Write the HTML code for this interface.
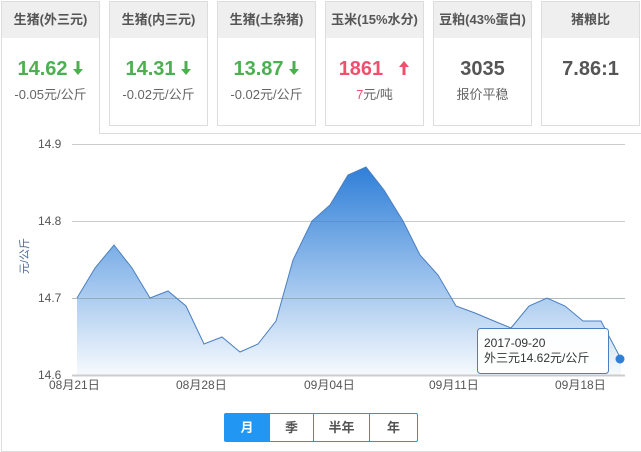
<!DOCTYPE html>
<html><head><meta charset="utf-8"><style>
*{margin:0;padding:0;box-sizing:border-box}
body{width:641px;height:452px;background:#fff;font-family:"Liberation Sans","Noto Sans CJK SC",sans-serif;position:relative;overflow:hidden}
.card{position:absolute;top:1px;width:99px;height:125px;border:1px solid #ddd;background:#fff}
.card .h{height:36px;background:#efefef;text-align:center;line-height:36px;font-size:13px;font-weight:bold;color:#555}
.card .v{text-align:center;font-size:20px;font-weight:bold;margin-top:18px;height:26px;line-height:26px}
.card .v svg{vertical-align:-1px;margin-left:4px}
.card .s{text-align:center;font-size:13px;margin-top:2px;color:#666}
.g{color:#4caf50}.r{color:#f0506e}.d{color:#555}
#panel{position:absolute;left:1px;top:133px;width:640px;height:319px;border-left:1px solid #ddd;border-bottom:1px solid #ddd}
.btns{position:absolute;left:224px;top:413px;height:29px;width:194px;border:1px solid #2196f3;border-radius:2px;display:flex;font-size:13px;font-weight:bold;color:#555}
.btns div{text-align:center;line-height:27px;border-left:1px solid #2196f3}
</style></head><body>
<div id="panel"></div>
<div style="position:absolute;left:99px;top:133px;width:542px;height:1px;background:#ddd"></div>
<div class="card" style="left:1px;height:133px;border-bottom:none"><div class="h">生猪(外三元)</div><div class="v g">14.62<svg width="12" height="16" viewBox="0 0 12 16"><path d="M4.5 1h3v8h3.5L6 15 1 9h3.5z" fill="#4caf50"/></svg></div><div class="s g">-0.05元/<span style="color:#666">公斤</span></div></div>
<div class="card" style="left:109px"><div class="h">生猪(内三元)</div><div class="v g">14.31<svg width="12" height="16" viewBox="0 0 12 16"><path d="M4.5 1h3v8h3.5L6 15 1 9h3.5z" fill="#4caf50"/></svg></div><div class="s g">-0.02元/<span style="color:#666">公斤</span></div></div>
<div class="card" style="left:217px"><div class="h">生猪(土杂猪)</div><div class="v g">13.87<svg width="12" height="16" viewBox="0 0 12 16"><path d="M4.5 1h3v8h3.5L6 15 1 9h3.5z" fill="#4caf50"/></svg></div><div class="s g">-0.02元/<span style="color:#666">公斤</span></div></div>
<div class="card" style="left:325px"><div class="h">玉米(15%水分)</div><div class="v r">1861 &nbsp;<svg width="12" height="16" viewBox="0 0 12 16"><path d="M4.5 15h3V7h3.5L6 1 1 7h3.5z" fill="#f0506e"/></svg></div><div class="s"><span class="r">7</span>元/吨</div></div>
<div class="card" style="left:433px"><div class="h">豆粕(43%蛋白)</div><div class="v d">3035</div><div class="s">报价平稳</div></div>
<div class="card" style="left:541px"><div class="h">猪粮比</div><div class="v d">7.86:1</div></div>
<svg width="641" height="452" style="position:absolute;left:0;top:0">
<defs><linearGradient id="gr" gradientUnits="userSpaceOnUse" x1="0" y1="167" x2="0" y2="375"><stop offset="0" stop-color="#2f7fd8"/><stop offset="1" stop-color="#2f7fd8" stop-opacity="0.04"/></linearGradient></defs>
<g stroke="#ccc" stroke-width="1">
<line x1="72" y1="144.5" x2="625" y2="144.5"/><line x1="72" y1="221.5" x2="625" y2="221.5"/><line x1="72" y1="298.5" x2="625" y2="298.5"/><line x1="72" y1="375.5" x2="625" y2="375.5" stroke-width="2"/></g>
<polygon fill="url(#gr)" points="77,375 77,298 95,268 114,245 132,268 150,298 168,291 186,306 204,344 222,337 240,352 258,344 276,321 293,260 312,221 330,205 348,175 366,167 384,190 403,221 420,255 438,275 456,306 475,313 494,321 511,328 529,306 547,298 565,306 583,321 601,321 621,359 621,375"/>
<line x1="72" y1="298.5" x2="625" y2="298.5" stroke="#9aa" stroke-opacity="0.5"/>
<polyline fill="none" stroke="#4a7fc0" stroke-width="1" points="77,298 95,268 114,245 132,268 150,298 168,291 186,306 204,344 222,337 240,352 258,344 276,321 293,260 312,221 330,205 348,175 366,167 384,190 403,221 420,255 438,275 456,306 475,313 494,321 511,328 529,306 547,298 565,306 583,321 601,321 621,359"/>
<circle cx="620" cy="359" r="4.5" fill="#2f7fd8"/>
<g font-family="Liberation Sans,Noto Sans CJK SC,sans-serif" font-size="12" fill="#555">
<text x="38" y="148">14.9</text><text x="38" y="225">14.8</text><text x="38" y="302">14.7</text><text x="38" y="379">14.6</text>
<text x="49" y="389">08月21日</text><text x="176" y="389">08月28日</text><text x="304" y="389">09月04日</text><text x="429" y="389">09月11日</text><text x="555" y="389">09月18日</text>
<text transform="translate(28,256) rotate(-90)" font-size="11" fill="#4a6a9a" text-anchor="middle">元/公斤</text>
</g>
<rect x="477.5" y="328.5" width="131" height="45" rx="3" fill="#fff" fill-opacity="0.95" stroke="#4a7fc0"/>
<g font-family="Liberation Sans,Noto Sans CJK SC,sans-serif" font-size="12" fill="#333"><text x="484" y="347">2017-09-20</text><text x="484" y="362">外三元14.62元/公斤</text></g>
</svg>
<div class="btns"><div style="width:44px;background:#2196f3;color:#fff;border-left:none">月</div><div style="width:44px">季</div><div style="width:56px">半年</div><div style="flex:1">年</div></div>
</body></html>
